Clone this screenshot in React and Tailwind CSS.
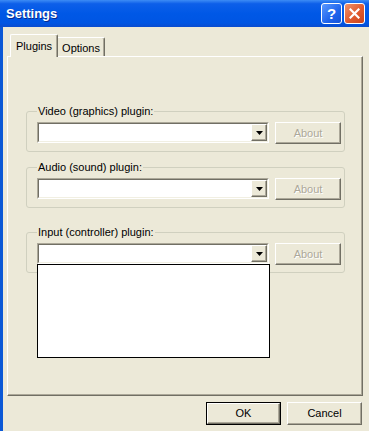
import React from 'react'

function TitleBar() {
  return (
    <div className="h-[27px] flex items-center pl-[6px] pr-[4px] bg-[linear-gradient(to_bottom,#3d8cf5_0%,#0d5fe9_14%,#0058e6_50%,#0055e3_85%,#0a4ccf_100%)]">
      <span className="flex-1 text-white font-bold text-[13px] leading-none [text-shadow:1px_1px_0_#0a2a8c]">Settings</span>
      <div className="flex gap-[2px]">
        <div className="w-[21px] h-[21px] rounded-[3px] border border-white flex items-center justify-center bg-[linear-gradient(135deg,#5a99ff,#1f64ec_60%,#1452d8)]">
          <span className="text-white font-bold text-[15px] leading-none">?</span>
        </div>
        <div className="w-[21px] h-[21px] rounded-[3px] border border-white flex items-center justify-center bg-[linear-gradient(135deg,#f0936c,#e05a2e_55%,#c9431c)]">
          <svg width="11" height="11" viewBox="0 0 11 11">
            <path d="M1.5 1.5 L9.5 9.5 M9.5 1.5 L1.5 9.5" stroke="white" strokeWidth="2.2" strokeLinecap="square" />
          </svg>
        </div>
      </div>
    </div>
  )
}

function DropButton() {
  return (
    <div className="w-[16px] h-full flex items-center justify-center bg-[#ece9d8] border border-t-white border-l-white border-b-[#716f64] border-r-[#716f64] shadow-[inset_-1px_-1px_0_#aca899]">
      <svg width="7" height="4" viewBox="0 0 7 4">
        <polygon points="0,0 7,0 3.5,4" fill="black" />
      </svg>
    </div>
  )
}

function Combo({ open }) {
  return (
    <div className="relative w-[232px] h-[21px]">
      <div className="h-full border border-t-[#aca899] border-l-[#aca899] border-b-white border-r-white">
        <div className="h-full flex bg-white border border-t-[#716f64] border-l-[#716f64] border-b-[#f1efe2] border-r-[#f1efe2]">
          <div className="flex-1" />
          <DropButton />
        </div>
      </div>
      {open && (
        <div className="absolute left-0 top-full w-[233px] h-[94px] bg-white border border-black z-10" />
      )}
    </div>
  )
}

function RaisedButton({ children, disabled, isDefault, className }) {
  const inner = (
    <div className="w-full h-full flex items-center justify-center bg-[#ece9d8] border border-t-white border-l-white border-b-[#716f64] border-r-[#716f64] shadow-[inset_-1px_-1px_0_#aca899]">
      <span className={disabled ? 'text-[#aca899] [text-shadow:1px_1px_0_#ffffff]' : 'text-black'}>{children}</span>
    </div>
  )
  if (isDefault) {
    return <div className={`border border-black ${className}`}>{inner}</div>
  }
  return <div className={className}>{inner}</div>
}

function PluginGroup({ label, open, className }) {
  return (
    <fieldset className={`w-[319px] border border-[#d0d0bf] rounded-[3px] pl-[10px] pr-[3px] pb-[7px] ${className}`}>
      <legend className="px-[1px] leading-[13px]">{label}</legend>
      <div className="flex items-start gap-[6px] pt-[4px]">
        <Combo open={open} />
        <RaisedButton disabled className="w-[66px] h-[22px]">About</RaisedButton>
      </div>
    </fieldset>
  )
}

export default function App() {
  return (
    <div className="w-[369px] h-[431px] overflow-hidden flex flex-col bg-[#ece9d8] font-['Liberation_Sans',Arial,sans-serif] text-[11px] text-black">
      <TitleBar />
      <div className="flex-1 flex flex-col border-l-[3px] border-[#0b58d6] pl-[4px] pr-[6px] pt-[7px]">
        {/* tabs */}
        <div className="flex items-end pl-[3px]">
          <div className="relative z-10 -mb-px h-[23px] px-[5px] flex items-center bg-[#ece9d8] border-t border-l border-r border-t-white border-l-white border-r-[#716f64] rounded-tl-[2px] rounded-tr-[2px] shadow-[inset_-1px_0_0_#aca899]">
            <span className="pt-[1px]">Plugins</span>
          </div>
          <div className="h-[19px] px-[4px] flex items-center border-t border-r border-t-white border-r-[#716f64] rounded-tr-[2px] shadow-[inset_-1px_0_0_#aca899]">
            <span className="pt-[2px]">Options</span>
          </div>
        </div>

        {/* tab panel */}
        <div className="h-[340px] flex flex-col border border-t-white border-l-white border-r-[#716f64] border-b-[#716f64] shadow-[inset_-1px_-1px_0_#aca899]">
          <PluginGroup label="Video (graphics) plugin:" className="ml-[18px] mt-[48px]" />
          <PluginGroup label="Audio (sound) plugin:" className="ml-[18px] mt-[9px]" />
          <PluginGroup label="Input (controller) plugin:" open className="ml-[18px] mt-[18px]" />
        </div>

        {/* dialog buttons */}
        <div className="flex justify-end gap-[6px] mt-[6px] pr-[1px]">
          <RaisedButton isDefault className="w-[75px] h-[23px]">OK</RaisedButton>
          <RaisedButton className="w-[75px] h-[23px]">Cancel</RaisedButton>
        </div>
      </div>
    </div>
  )
}
